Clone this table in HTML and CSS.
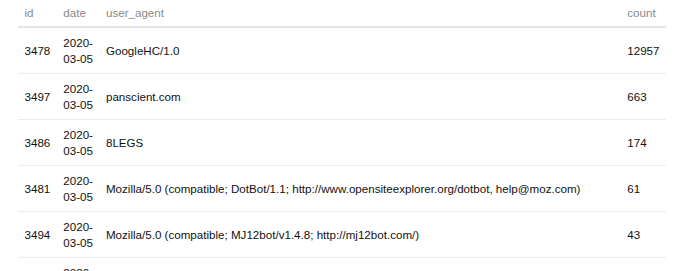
FILE: index.html
```html
<!DOCTYPE html>
<html>
<head>
<meta charset="utf-8">
<link rel="stylesheet" href="styles.css">
</head>
<body>
<div class="wrap">
<table class="grid">
<thead>
<tr><th class="c-id">id</th><th class="c-date">date</th><th class="c-ua">user_agent</th><th class="c-count">count</th></tr>
</thead>
<tbody>
<tr><td class="c-id">3478</td><td class="c-date">2020-<wbr>03-05</td><td class="c-ua">GoogleHC/1.0</td><td class="c-count">12957</td></tr>
<tr><td class="c-id">3497</td><td class="c-date">2020-<wbr>03-05</td><td class="c-ua">panscient.com</td><td class="c-count">663</td></tr>
<tr><td class="c-id">3486</td><td class="c-date">2020-<wbr>03-05</td><td class="c-ua">8LEGS</td><td class="c-count">174</td></tr>
<tr><td class="c-id">3481</td><td class="c-date">2020-<wbr>03-05</td><td class="c-ua">Mozilla/5.0 (compatible; DotBot/1.1; http://www.opensiteexplorer.org/dotbot, help@moz.com)</td><td class="c-count">61</td></tr>
<tr><td class="c-id">3494</td><td class="c-date">2020-<wbr>03-05</td><td class="c-ua">Mozilla/5.0 (compatible; MJ12bot/v1.4.8; http://mj12bot.com/)</td><td class="c-count">43</td></tr>
<tr><td class="c-id">3479</td><td class="c-date">2020-<wbr>03-05</td><td class="c-ua">Mozilla/5.0</td><td class="c-count">40</td></tr>
</tbody>
</table>
</div>
</body>
</html>
```

FILE: styles.css
```css
html, body {
  margin: 0;
  padding: 0;
  background: #ffffff;
}

body {
  font-family: "Liberation Sans", Arial, sans-serif;
  font-size: 11.6px;
  color: #111111;
}

.wrap {
  padding: 0 0 0 18px;
  overflow: hidden;
  height: 271px;
}

.grid {
  width: 648px;
  border-collapse: collapse;
  border-spacing: 0;
}

.grid th,
.grid td {
  padding: 7px 6.5px;
  line-height: 15.5px;
  text-align: left;
  vertical-align: middle;
}

.grid th {
  font-weight: normal;
  color: #8a8a8a;
  padding-top: 5px;
  padding-bottom: 5.5px;
  border-bottom: 2px solid #e6e6e6;
}

.grid td {
  border-bottom: 1px solid #ececec;
}

.c-id,
.c-date,
.c-count {
  width: 1%;
}

.c-id,
.c-count {
  white-space: nowrap;
}
```
